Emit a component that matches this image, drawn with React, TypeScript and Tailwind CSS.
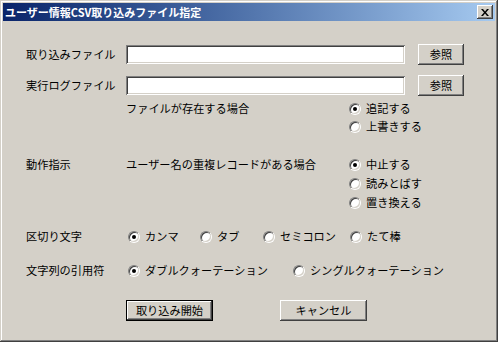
import React from "react";

const font = { fontFamily: '"Noto Sans CJK JP", "Noto Sans", sans-serif' };

const raised =
  "bg-[#d4d0c8] shadow-[inset_-1px_-1px_#404040,inset_1px_1px_#ffffff,inset_-2px_-2px_#808080,inset_2px_2px_#d4d0c8]";
const sunken =
  "bg-white shadow-[inset_1px_1px_#808080,inset_-1px_-1px_#ffffff,inset_2px_2px_#404040,inset_-2px_-2px_#d4d0c8]";

function Radio({ checked, label }: { checked?: boolean; label: string }) {
  return (
    <div className="flex items-center h-full pl-[2px]">
      <div className="w-[12px] h-[12px] rounded-full border border-t-[#808080] border-l-[#808080] border-r-white border-b-white flex-none">
        <div className="w-full h-full rounded-full bg-white shadow-[inset_1px_1px_#404040,inset_-1px_-1px_#d4d0c8] flex items-center justify-center">
          {checked && <div className="w-[4px] h-[4px] rounded-full bg-black" />}
        </div>
      </div>
      <span className="ml-[5px] leading-none whitespace-nowrap">{label}</span>
    </div>
  );
}

function Button({ label, def, w }: { label: string; def?: boolean; w: string }) {
  return (
    <div className={`${w} h-[21px] ${def ? "border border-black" : ""} flex-none`}>
      <div className={`w-full h-full ${raised} flex items-center justify-center leading-none`}>
        {label}
      </div>
    </div>
  );
}

export default function App() {
  return (
    <div
      className="w-[498px] h-[342px] bg-[#d4d0c8] p-[3px] text-black text-[11.2px] shadow-[inset_-1px_-1px_#404040,inset_1px_1px_#d4d0c8,inset_-2px_-2px_#808080,inset_2px_2px_#ffffff] overflow-hidden"
      style={font}
    >
      {/* title bar */}
      <div className="h-[18px] bg-gradient-to-r from-[#0a246a] to-[#a6caf0] flex items-center pl-[2px] pr-[2px]">
        <span className="text-white font-bold text-[11px] leading-none whitespace-nowrap">
          ユーザー情報CSV取り込みファイル指定
        </span>
        <div className={`ml-auto w-[16px] h-[14px] ${raised} flex items-center justify-center`}>
          <svg width="8" height="7" viewBox="0 0 8 7">
            <path d="M0 0h2l2 2.5L6 0h2L5 3.5 8 7H6L4 4.5 2 7H0l3-3.5z" fill="#000" />
          </svg>
        </div>
      </div>

      <div className="pl-[23px] pt-[23px]">
        {/* file rows */}
        <div className="flex items-center h-[21px]">
          <span className="w-[100px] leading-none">取り込みファイル</span>
          <div className={`w-[279px] h-[19px] ${sunken}`} />
          <div className="ml-[13px]">
            <Button label="参照" w="w-[46px]" />
          </div>
        </div>
        <div className="flex items-center h-[21px] mt-[10px]">
          <span className="w-[100px] leading-none">実行ログファイル</span>
          <div className={`w-[279px] h-[19px] ${sunken}`} />
          <div className="ml-[13px]">
            <Button label="参照" w="w-[46px]" />
          </div>
        </div>

        {/* existing file */}
        <div className="flex mt-[4px]">
          <span className="w-[100px]" />
          <div className="w-[221px] h-[18px] flex items-center leading-none">ファイルが存在する場合</div>
          <div className="flex flex-col">
            <div className="h-[18px]">
              <Radio checked label="追記する" />
            </div>
            <div className="h-[18px]">
              <Radio label="上書きする" />
            </div>
          </div>
        </div>

        {/* action */}
        <div className="flex mt-[19px]">
          <div className="w-[100px] h-[19px] flex items-center leading-none">動作指示</div>
          <div className="w-[221px] h-[19px] flex items-center leading-none">ユーザー名の重複レコードがある場合</div>
          <div className="flex flex-col">
            <div className="h-[19px]">
              <Radio checked label="中止する" />
            </div>
            <div className="h-[19px]">
              <Radio label="読みとばす" />
            </div>
            <div className="h-[19px]">
              <Radio label="置き換える" />
            </div>
          </div>
        </div>

        {/* delimiter */}
        <div className="flex h-[18px] mt-[16px]">
          <div className="w-[100px] flex items-center leading-none">区切り文字</div>
          <div className="w-[72px]">
            <Radio checked label="カンマ" />
          </div>
          <div className="w-[63px]">
            <Radio label="タブ" />
          </div>
          <div className="w-[87px]">
            <Radio label="セミコロン" />
          </div>
          <div>
            <Radio label="たて棒" />
          </div>
        </div>

        {/* quote */}
        <div className="flex h-[18px] mt-[16px]">
          <div className="w-[100px] flex items-center leading-none">文字列の引用符</div>
          <div className="w-[165px]">
            <Radio checked label="ダブルクォーテーション" />
          </div>
          <div>
            <Radio label="シングルクォーテーション" />
          </div>
        </div>

        {/* actions */}
        <div className="flex mt-[20px] pl-[100px]">
          <Button label="取り込み開始" def w="w-[87px]" />
          <div className="ml-[67px]">
            <Button label="キャンセル" w="w-[87px]" />
          </div>
        </div>
      </div>
    </div>
  );
}
